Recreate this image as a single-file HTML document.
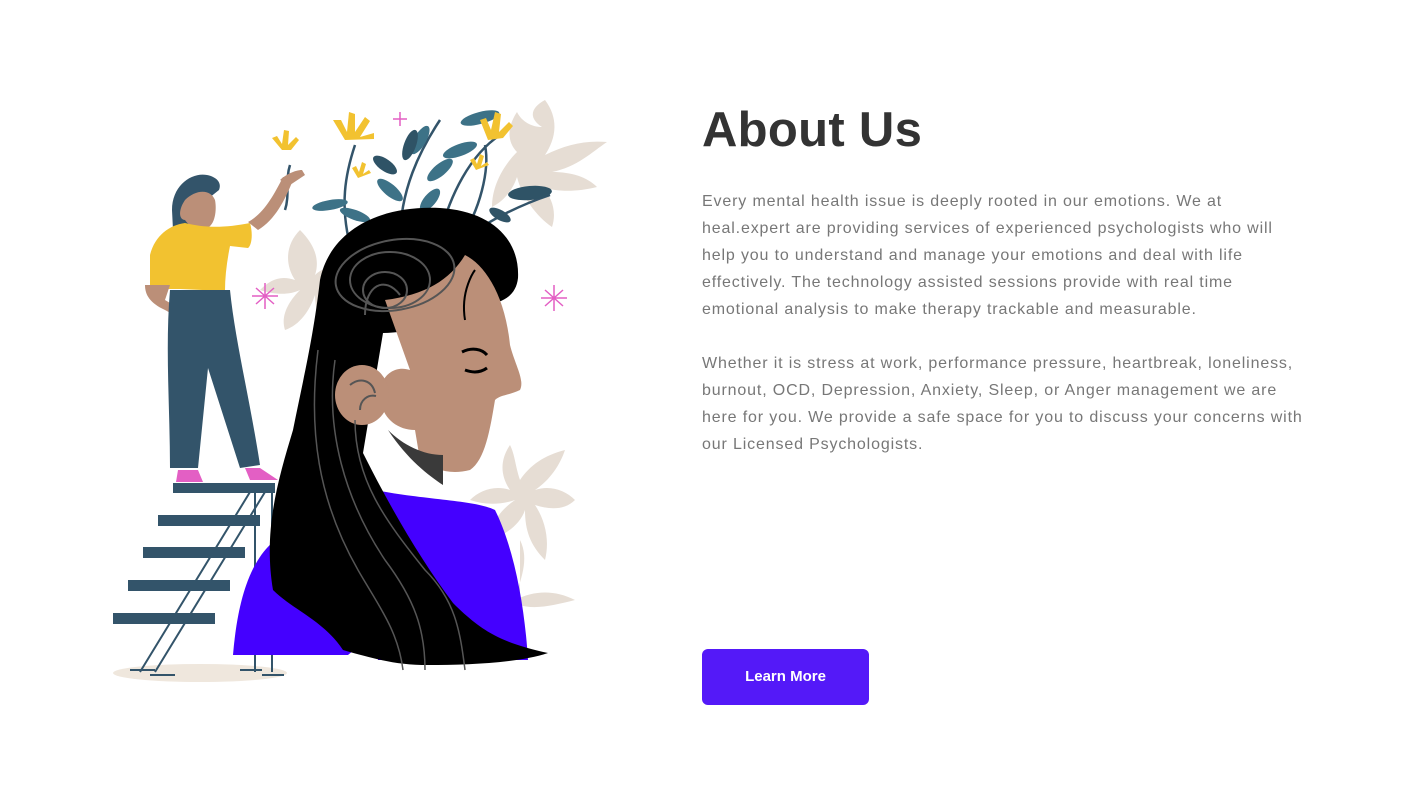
<!DOCTYPE html>
<html><head><meta charset="utf-8"><style>
html,body{margin:0;padding:0;background:#fff;width:1411px;height:800px;overflow:hidden}
h1{position:absolute;left:702px;top:100px;margin:0;font:bold 49px/60px "Liberation Sans",sans-serif;color:#333;letter-spacing:0.3px}
.p{position:absolute;left:702px;margin:0;font:16px/27px "Liberation Sans",sans-serif;color:#777;letter-spacing:0.85px;white-space:nowrap}
.btn{position:absolute;left:702px;top:649px;width:167px;height:56px;background:#5419f8;border-radius:6px;color:#fff;font:bold 15px/56px "Liberation Sans",sans-serif;text-align:center}
svg{position:absolute;left:0;top:0}
</style></head><body>
<svg width="700" height="800" viewBox="0 0 700 800">
<g fill="#e6ddd4">
<path d="M545 100c15 20 10 40 0 55 20-10 40-15 62-13-15 10-30 25-55 30 20 0 35 5 45 15-20 5-40 5-55 0 10 10 15 25 10 40-15-10-30-30-35-50-5 15-15 25-25 30 0-20 10-40 25-55-10-10-10-25 0-40 5 10 15 15 25 15-15-10-10-20 3-27z"/>
<path d="M300 230c-15 15-15 35-5 50-15-5-25 0-35 10 15 5 30 5 40 0-10 10-20 25-15 40 15-5 25-20 30-35 0 15 5 30 15 40 5-20 5-35-5-50 15 0 25-5 30-15-15-5-30-5-40 5 5-15 0-30-15-45z"/>
<path d="M510 445c-10 15-10 30 0 45-15-5-30 0-40 10 15 5 30 5 45 0-15 10-25 25-25 40 15-5 30-15 35-30 0 20 5 35 20 50 5-20 0-40-10-55 15 5 30 5 40-5-10-10-25-15-40-10 15-10 25-25 30-40-20 5-35 15-45 30-5-15-5-25-10-35z"/>
<path d="M520 540c10 20 0 40-5 60 20-10 40-10 60 0-20 5-40 10-55 5z"/>
</g>
<g fill="none" stroke="#33546a" stroke-width="2.5">
<path d="M350 245c-10-40-5-70 5-100"/><path d="M400 240c0-50 20-90 40-120"/><path d="M440 235c10-40 30-80 60-100"/><path d="M460 240c20-30 30-70 25-95"/><path d="M470 235c20-15 50-30 80-40"/>
<path d="M290 165c-5 15 0 30-5 45"/>
</g>
<g fill="#3d7287">
<ellipse cx="330" cy="205" rx="18" ry="5" transform="rotate(-10 330 205)"/><ellipse cx="355" cy="215" rx="16" ry="5" transform="rotate(20 355 215)"/>
<ellipse cx="420" cy="140" rx="16" ry="6" transform="rotate(-60 420 140)"/><ellipse cx="440" cy="170" rx="16" ry="6" transform="rotate(-40 440 170)"/>
<ellipse cx="480" cy="118" rx="20" ry="6" transform="rotate(-15 480 118)"/><ellipse cx="460" cy="150" rx="18" ry="6" transform="rotate(-20 460 150)"/>
<ellipse cx="430" cy="200" rx="14" ry="6" transform="rotate(-50 430 200)"/><ellipse cx="390" cy="190" rx="16" ry="6" transform="rotate(40 390 190)"/>
</g>
<g fill="#2f5366">
<ellipse cx="530" cy="193" rx="22" ry="7" transform="rotate(-5 530 193)"/><ellipse cx="410" cy="145" rx="6" ry="16" transform="rotate(20 410 145)"/>
<ellipse cx="385" cy="165" rx="14" ry="6" transform="rotate(35 385 165)"/><ellipse cx="500" cy="215" rx="12" ry="5" transform="rotate(30 500 215)"/>
</g>
<g fill="#f2c230">
<path d="M345 140l-12-20 8 0 6 12 2-20 6 2 0 18 10-15 5 4-10 16 14-4 0 6z"/>
<path d="M488 140l-8-20 6-2 5 12 4-18 6 2-2 18 10-10 4 4-10 12z"/>
<path d="M282 150l-10-12 5-2 5 8 2-14 5 1-1 14 8-8 3 3-8 10z"/>
<path d="M358 178l-6-10 4-2 3 6 3-10 4 2-3 10 6-4 2 3z"/>
<path d="M476 170l-6-10 4-2 3 6 3-10 4 2-3 10 6-4 2 3z"/>
</g>
<g stroke="#e35fc4" stroke-width="1.5">
<path d="M265 283v26M252 296h26M256 288l18 16M274 288l-18 16"/>
<path d="M554 285v26M541 298h26M545 290l18 16M563 290l-18 16"/>
<path d="M400 112v14M393 119h14"/>
</g>
<ellipse cx="200" cy="673" rx="87" ry="9" fill="#efe7dd"/>
<g stroke="#33546a" stroke-width="2" fill="none">
<path d="M255 492v180M272 492v180M250 492L140 672M265 492L155 672"/>
<path d="M240 670h22M262 675h22M130 670h25M150 675h25"/>
</g>
<g fill="#33546a">
<rect x="173" y="483" width="102" height="10"/><rect x="158" y="515" width="102" height="11"/><rect x="143" y="547" width="102" height="11"/><rect x="128" y="580" width="102" height="11"/><rect x="113" y="613" width="102" height="11"/>
</g>
<path d="M233 655c5-60 20-110 60-125 30-10 60-5 75 30 15 40 0 80-20 95z" fill="#4400ff"/>
<path d="M375 490c50 10 100 10 120 20 20 40 30 100 33 150l-150 0z" fill="#4400ff"/>
<path d="M320 280c10-50 60-75 120-72 50 3 80 30 78 70-2 20-20 28-40 25-30 20-70 30-95 30l-20 120c30 60 60 110 90 150 30 30 50 40 95 50-30 10-80 12-120 12-30 0-50-5-85-15-20-30-50-40-70-60-10-60 5-110 20-160 10-50 20-90 27-150z" fill="#000"/>
<path d="M385 300c40-5 65-20 80-45 20 10 40 40 45 90 5 20 15 35 10 45-10 5-20 5-25 10-5 30-10 60-25 70-20 5-35 0-50-10l-5-30c-20 0-35-15-35-35s15-30 30-25z" fill="#bb8f78"/>
<ellipse cx="362" cy="395" rx="27" ry="30" fill="#bb8f78"/>
<path d="M388 430c20 30 40 45 55 55v-30c-20 0-40-10-55-25z" fill="#3a3a3a"/>
<path d="M350 385c10-8 22-5 25 8M360 410c0-10 8-16 16-14" stroke="#555" stroke-width="2" fill="none"/>
<path d="M462 352c10-5 20-3 25 3M465 370c8 3 15 3 22-2" stroke="#000" stroke-width="3" fill="none"/>
<path d="M465 320c-5-30 10-50 10-50" stroke="#000" stroke-width="2" fill="none"/>
<g stroke="#555" stroke-width="2" fill="none">
<ellipse cx="395" cy="275" rx="60" ry="35" transform="rotate(-10 395 275)"/>
<ellipse cx="390" cy="280" rx="40" ry="28"/><ellipse cx="385" cy="290" rx="22" ry="18"/>
<path d="M365 315c0-30 20-40 35-20"/>
</g>
<g stroke="#555" stroke-width="1.5" fill="none">
<path d="M318 350c-10 80 0 150 40 220 20 35 40 60 45 100"/><path d="M335 360c-10 70 10 140 50 200 30 40 40 70 40 110"/>
<path d="M355 420c0 60 30 100 70 150 30 30 35 60 40 100"/>
</g>
<path d="M172 210c0-25 20-38 35-35 10 2 15 8 12 15l-25 20-2 40-18 0z" fill="#33546a"/>
<path d="M185 200c10-10 25-12 30 0 2 10 0 25-8 28-10 3-18-2-22-8-5 0-8-8 0-20z" fill="#bb8f78"/>
<path d="M150 255c5-20 20-30 35-32 20 5 40 5 65 0 3 10 2 22-2 25l-18-2c-3 15-5 30-5 45l-45-2-15 0-15-2z" fill="#f2c230"/>
<path d="M248 222c15-8 25-25 35-45l10 3c-8 20-18 40-35 50z" fill="#bb8f78"/>
<path d="M280 180c5-5 15-10 22-10l3 5-15 10z" fill="#bb8f78"/>
<path d="M145 285c0 10 5 18 20 25 10 5 20 15 30 15l-5-10-25-15 5-15z" fill="#bb8f78"/>
<path d="M170 290l60 0c5 50 20 110 30 175l-20 3-32-100-10 100h-28c0-60-5-120 0-178z" fill="#33546a"/>
<path d="M178 470h20l5 12h-27zM245 468h15l18 12h-28z" fill="#e35fc4"/>
</svg>
<h1>About Us</h1>
<p class="p" style="top:188px">Every mental health issue is deeply rooted in our emotions. We at<br>heal.expert are providing services of experienced psychologists who will<br>help you to understand and manage your emotions and deal with life<br>effectively. The technology assisted sessions provide with real time<br>emotional analysis to make therapy trackable and measurable.</p>
<p class="p" style="top:350px">Whether it is stress at work, performance pressure, heartbreak, loneliness,<br>burnout, OCD, Depression, Anxiety, Sleep, or Anger management we are<br>here for you. We provide a safe space for you to discuss your concerns with<br>our Licensed Psychologists.</p>
<div class="btn">Learn More</div>
</body></html>
